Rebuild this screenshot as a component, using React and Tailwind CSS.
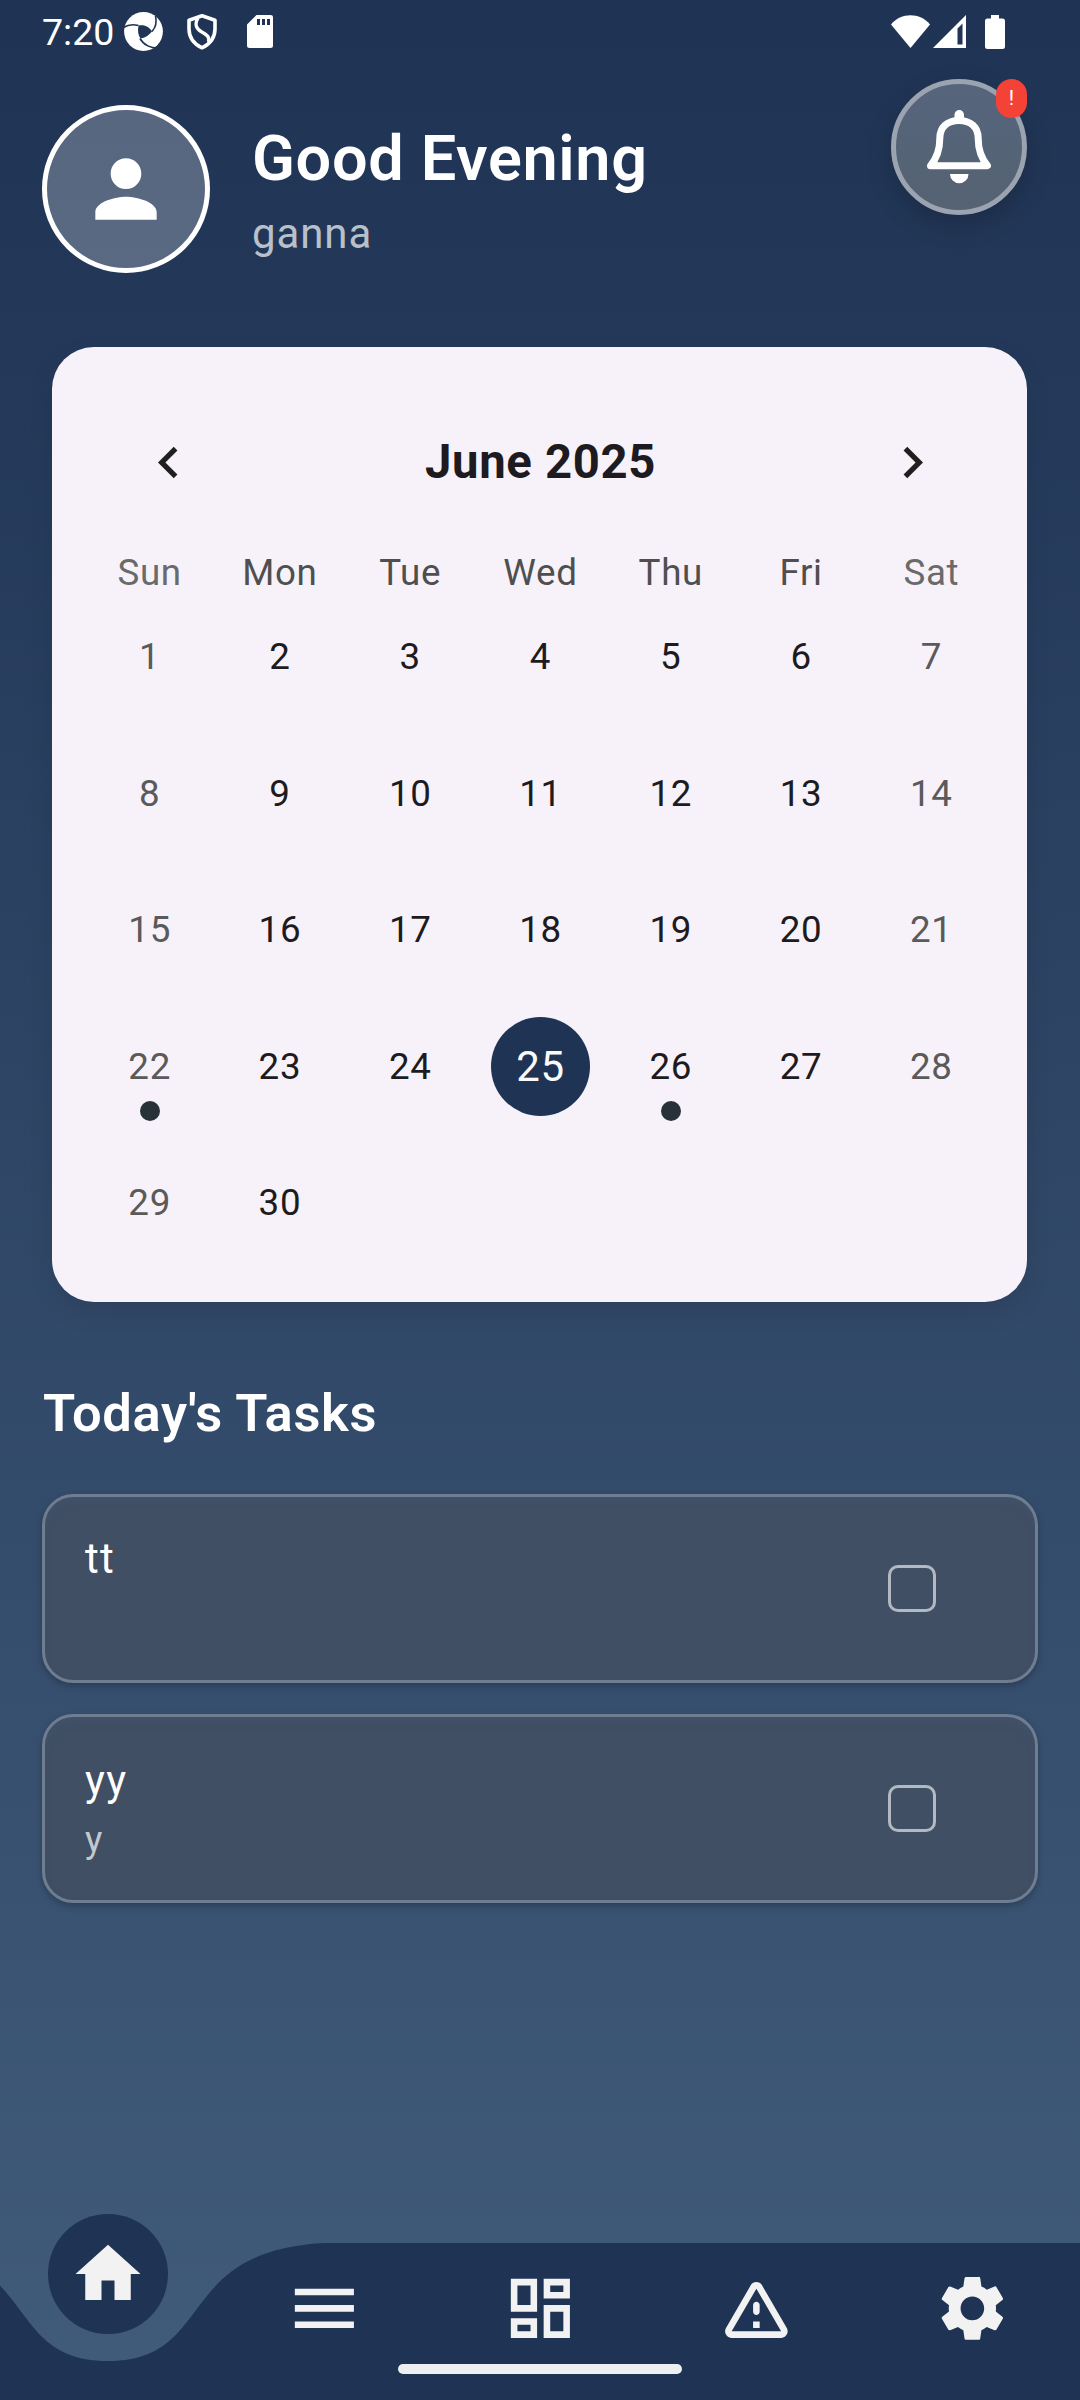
import { MdHome, MdMenu, MdOutlineDashboard, MdSettings, MdPerson, MdChevronLeft, MdChevronRight } from "react-icons/md";

const WEEKDAYS = ["Sun", "Mon", "Tue", "Wed", "Thu", "Fri", "Sat"];
const DAYS = Array.from({ length: 30 }, (_, i) => i + 1);
const SELECTED = 25;
const MARKED = [22, 26];
const TASKS = [
  { title: "tt", note: "" },
  { title: "yy", note: "y" },
];

function StatusBar() {
  return (
    <div className="flex h-[63px] items-center pl-[42px] pr-[75px] text-white">
      <span className="w-[81px] text-[37.500px] leading-[62px]">7:20</span>
      <svg width="40" height="40" viewBox="0 0 40 40">
        <circle cx="20.5" cy="19.5" r="19.4" fill="#fff" />
        <path d="M15.5 13.5 C20 12.5 26 14 29 19.5 C26 23 22 26 17.5 26.5 C15 23 14.500 18 15.5 13.5Z" fill="#203454" />
        <path d="M0.5 15.5 C5 12.500 10 12 15.5 13.5 M32.500 4 C34 10 33 15 29 19.5 M36 36 C28 36.5 20.5 33 17 26.500" fill="none" stroke="#203454" strokeWidth="1.6" />
      </svg>
      <svg width="30" height="36" viewBox="0 0 30 36" className="ml-[24px]">
        <path d="M15 1.8 L28 6.2 V15 C28 23.5 23 30 15 33.8 C7 30 2 23.5 2 15 V6.2Z" fill="none" stroke="#fff" strokeWidth="3.600" strokeLinejoin="round" />
        <path d="M11 4 C7 11 9.5 14.5 14 17.5 C20 21 23 23 21.5 28" fill="none" stroke="#fff" strokeWidth="3.400" />
      </svg>
      <svg width="26" height="33" viewBox="0 0 26 33" className="ml-[30px]">
        <path fillRule="evenodd" d="M9.5 0H23.5A2.5 2.5 0 0 1 26 2.5V30.500A2.500 2.500 0 0 1 23.500 33H2.500A2.500 2.500 0 0 1 0 30.500V9.500Z M10 4V10H13V4Z M15 4V10H18V4Z M20 4V10H23V4Z" fill="#fff" />
      </svg>
      <svg width="39" height="33" viewBox="0 0 39 33" className="ml-auto">
        <path d="M19.500 33 L0 9.500 C10 -2.700 29 -2.700 39 9.500Z" fill="#fff" />
      </svg>
      <svg width="33" height="33" viewBox="0 0 33 33" className="ml-[3px]">
        <path fillRule="evenodd" d="M33 0V33H0Z M29.500 8.500L24.500 13.500V29.500H29.500Z" fill="#fff" />
      </svg>
      <svg width="20" height="34" viewBox="0 0 20 34" className="ml-[19px]">
        <path d="M6 0H14V3.500H17.500A2.500 2.500 0 0 1 20 6V31.500A2.500 2.500 0 0 1 17.500 34H2.500A2.500 2.500 0 0 1 0 31.500V6A2.500 2.500 0 0 1 2.500 3.500H6Z" fill="#fff" />
      </svg>
    </div>
  );
}

function BellIcon() {
  return (
    <svg width="64" height="74" viewBox="0 0 64 74">
      <rect x="27.500" y="0" width="9.500" height="14" rx="4.700" fill="#fff" />
      <path d="M3.500 55.700 C10 48 12.800 38 12.800 28.500 C12.800 17 20.500 10.500 32 10.500 C43.500 10.500 51.200 17 51.200 28.500 C51.200 38 54 48 60.500 55.700 Z" fill="none" stroke="#fff" strokeWidth="7" strokeLinejoin="round" />
      <path d="M23 64H41.500A9.200 9.200 0 0 1 23 64Z" fill="#fff" />
    </svg>
  );
}

function Header() {
  return (
    <header className="flex h-[284px] items-start pl-[42px] pr-[53px]">
      <div className="mt-[42px] flex size-[168px] items-center justify-center rounded-full border-[5px] border-white bg-white/25">
        <MdPerson className="size-[92px] text-white" />
      </div>
      <div className="ml-[42px] mt-[59px]">
        <h1 className="text-[63px] font-semibold leading-[74px] tracking-[0.66px] text-white">Good Evening</h1>
        <p className="mt-[13px] text-[42px] leading-[50px] tracking-[0.900px] text-white/70">ganna</p>
      </div>
      <div className="relative ml-auto mt-[16px] flex size-[136px] items-center justify-center rounded-full border-[5px] border-[#9ba3b0] bg-linear-to-b from-[#56657d] to-[#556272] shadow-[0_10px_26px_rgba(0,0,0,0.2)]">
        <BellIcon />
        <span className="absolute -right-[5px] -top-[5px] flex h-[39px] w-[31px] items-center justify-center rounded-[15.500px] bg-[#f44336] text-[21px] leading-none text-white">!</span>
      </div>
    </header>
  );
}

function Day({ day, weekend }) {
  const selected = day === SELECTED;
  return (
    <div className="relative flex h-[136.500px] items-center justify-center">
      <span
        className={
          selected
            ? "flex size-[98.500px] items-center justify-center rounded-full bg-[#1f3354] text-[42px] tracking-[0.66px] text-[#fafafa]"
            : weekend
              ? "text-[36.750px] tracking-[0.66px] text-[#5a5a5a]"
              : "text-[36.750px] tracking-[0.66px] text-[#1d1b20]"
        }
      >
        {day}
      </span>
      {MARKED.includes(day) && <span className="absolute top-[102.500px] size-[20px] rounded-full bg-[#263238]" />}
    </div>
  );
}

function Calendar() {
  return (
    <section className="mx-[52px] mr-[53px] h-[955px] rounded-[42px] bg-[#f7f2fa] pl-[32.500px] pr-[30.500px] pt-[52.500px] shadow-[0_10px_26px_rgba(0,0,0,0.1)]">
      <div className="flex h-[126px] items-center justify-between px-[52.500px] text-[#1f1f1f]">
        <MdChevronLeft className="size-[63px]" />
        <h2 className="text-[47.250px] font-bold tracking-[0.66px] text-[#1d1b20]">June 2025</h2>
        <MdChevronRight className="size-[63px]" />
      </div>
      <div className="mt-[31.500px] grid grid-cols-7 text-center text-[36.750px] leading-[31.500px] tracking-[0.66px]">
        {WEEKDAYS.map((name, i) => (
          <span key={name} className={i % 6 === 0 ? "text-[#6a6a6a]" : "text-[#4f4f4f]"}>
            {name}
          </span>
        ))}
      </div>
      <div className="grid grid-cols-7">
        {DAYS.map((day, i) => (
          <Day key={day} day={day} weekend={i % 7 === 0 || i % 7 === 6} />
        ))}
      </div>
    </section>
  );
}

function Task({ title, note }) {
  return (
    <li className="flex h-[189px] items-center justify-between rounded-[31.500px] border-[3px] border-[#6f7d91] bg-[#404f64] pl-[40px] pr-[99px] shadow-[0_3px_7px_rgba(0,0,0,0.25),inset_0_6px_8px_-3px_#44557388]">
      <div className="h-[116px]">
        <p className={note ? "mt-[5px] text-[42px] leading-[50px] tracking-[1.300px] text-white" : "mt-[3px] text-[42px] leading-[50px] tracking-[1.300px] text-white"}>{title}</p>
        {note && <p className="mt-[9px] text-[36.750px] leading-[50px] tracking-[0.660px] text-white/70">{note}</p>}
      </div>
      <span className="h-[47px] w-[48px] rounded-[10px] border-[3px] border-[#b2b9c3]" />
    </li>
  );
}

function NavBar() {
  return (
    <nav className="relative h-[186px]">
      <svg className="absolute inset-0" width="1080" height="186" viewBox="0 0 1080 186">
        <path d="M-108 29 C43.200 37 0 147 108 147 C216 147 172.800 37 324 29 H1080 V186 H-108Z" fill="#1f3354" />
      </svg>
      <div className="relative grid grid-cols-5 justify-items-center text-[#f2f2f2]">
        <div className="flex size-[120px] items-center justify-center rounded-full bg-[#1f3354]">
          <MdHome className="mb-px size-[78px]" />
        </div>
        <MdMenu className="mt-[55.300px] size-[78.750px]" />
        <MdOutlineDashboard className="mt-[55.300px] size-[78.750px]" />
        <svg className="mt-[55.300px] size-[78.750px]" viewBox="0 0 24 24" fill="currentColor">
          <path d="M12 5.990L19.530 19H4.470L12 5.990M2.740 18c-.77 1.330.190 3 1.730 3h15.060c1.540 0 2.500-1.670 1.730-3L13.730 4.990c-.77-1.330-2.690-1.330-3.460 0L2.740 18zM11 11v2c0 .55.450 1 1 1s1-.45 1-1v-2c0-.55-.45-1-1-1s-1 .45-1 1zm0 5h2v2h-2z" />
        </svg>
        <MdSettings className="mt-[55.300px] size-[78.750px]" />
      </div>
      <div className="absolute left-[398px] top-[150px] h-[10px] w-[284px] rounded-full bg-[#edeff3]" />
    </nav>
  );
}

export default function App() {
  return (
    <div className="flex h-[2400px] w-[1080px] flex-col overflow-hidden bg-linear-to-b from-[#1f3354] to-[#415b7a] font-[Roboto,sans-serif]">
      <StatusBar />
      <Header />
      <Calendar />
      <h2 className="ml-[43px] mt-[80px] text-[52.500px] font-semibold leading-[62px] tracking-[0.660px] text-white">Today's Tasks</h2>
      <ul className="mx-[42px] mt-[50px] flex flex-col gap-[31px]">
        {TASKS.map((task) => (
          <Task key={task.title} {...task} />
        ))}
      </ul>
      <div className="mt-auto">
        <NavBar />
      </div>
    </div>
  );
}
